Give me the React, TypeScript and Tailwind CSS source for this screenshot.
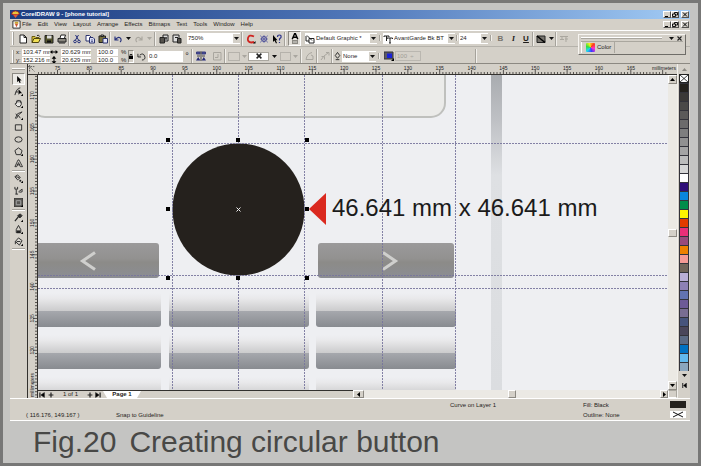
import type { ReactNode } from "react";

const MENUS = ["File", "Edit", "View", "Layout", "Arrange", "Effects", "Bitmaps", "Text", "Tools", "Window", "Help"];

const SWATCHES = [
  "#24211c", "#3a3836", "#4a4947", "#5b5a59", "#6c6b6b", "#7e7e7e", "#919191", "#a4a4a4", "#bcbcbc", "#d6d6d6",
  "#ffffff", "#2f0f78", "#0a86dc", "#008c4a", "#fdf500", "#e23c00", "#ea2f78", "#984a7c", "#ee8100", "#f59a95",
  "#706459", "#b9aed6", "#8d80b4", "#6273b0", "#6d5a96", "#796d92", "#47547c", "#4a465a", "#5b6a84", "#0071c2",
  "#62b9ee", "#8ba6be",
];

function Icon({ children, size = 10 }: { children: ReactNode; size?: number }) {
  return (
    <svg width={size} height={size} viewBox="0 0 10 10" fill="none" stroke="#222" strokeWidth="1" aria-hidden="true" className="shrink-0">
      {children}
    </svg>
  );
}

function Arrow({ color = "#111" }: { color?: string }) {
  return (
    <svg width="5" height="3" viewBox="0 0 5 3" aria-hidden="true" className="shrink-0">
      <path d="M0 0h5L2.5 3z" fill={color} />
    </svg>
  );
}

function Tool({ label, children }: { label: string; children: ReactNode }) {
  return (
    <button type="button" aria-label={label} className="flex h-[12px] w-[13px] shrink-0 items-center justify-center">
      {children}
    </button>
  );
}

function More({ label, color }: { label: string; color?: string }) {
  return (
    <button type="button" aria-label={label} className="flex h-[12px] w-[8px] shrink-0 items-center justify-center">
      <Arrow color={color} />
    </button>
  );
}

function Sep() {
  return <span className="h-[14px] w-[2px] shrink-0 border-r border-l border-r-[#f2f0ec] border-l-[#a5a29b]" />;
}

function Grip() {
  return <span className="mx-[2px] h-[13px] w-[2px] shrink-0 border-r border-l border-r-[#a5a29b] border-l-white" />;
}

function Combo({ label, value, width, icon }: { label: string; value: string; width: string; icon?: ReactNode }) {
  return (
    <label className={`flex h-[11px] shrink-0 items-center bg-white ${width}`}>
      {icon}
      <select aria-label={label} defaultValue={value} className="h-[11px] min-w-0 flex-1 appearance-none bg-transparent pl-px leading-[11px]">
        <option>{value}</option>
      </select>
      <span className="flex h-[9px] w-[7px] items-center justify-center bg-[#d4d0c8]">
        <Arrow />
      </span>
    </label>
  );
}

function Field({ label, value, width }: { label: string; value: string; width: string }) {
  return <input aria-label={label} defaultValue={value} className={`h-[7px] bg-white pl-px leading-[7px] ${width}`} />;
}

function WindowButtons() {
  const box = "flex h-[7px] w-[8px] items-center justify-center border border-t-white border-l-white border-r-[#55534f] border-b-[#55534f] bg-[#d4d0c8]";
  return (
    <div className="flex">
      <button type="button" aria-label="Minimize" className={box}>
        <svg width="6" height="5" viewBox="0 0 6 5"><path d="M1 4h3v1H1z" fill="#000" /></svg>
      </button>
      <button type="button" aria-label="Restore" className={box}>
        <svg width="6" height="5" viewBox="0 0 6 5" fill="none" stroke="#000"><path d="M2.500 2V.5h3v2.500H4M.5 2h3v2.500h-3z" strokeWidth=".9" /></svg>
      </button>
      <button type="button" aria-label="Close" className={`ml-[2px] ${box}`}>
        <svg width="6" height="5" viewBox="0 0 6 5" stroke="#000"><path d="M1 .5l4 4M5 .5l-4 4" /></svg>
      </button>
    </div>
  );
}

function MainToolbar() {
  return (
    <div className="flex h-[17px] shrink-0 items-center border-t border-b border-t-white border-b-[#b5b2ab]">
      <Grip />
      <Tool label="New"><Icon><path d="M2 1h4l2.500 2.500V9H2z" fill="#fff" /><path d="M6 1v2.500h2.500" /></Icon></Tool>
      <Tool label="Open"><Icon><path d="M1 8.500v-6h3l1 1h3v1" fill="#d9c23c" stroke="#6b5d10" /><path d="M1 8.500l2-4h6.500l-2 4z" fill="#f0df55" stroke="#4d4410" /><path d="M6 1.500q2-1 2.500 1" /></Icon></Tool>
      <Tool label="Save"><Icon><path d="M1 1.500h8v7.500H1z" fill="#55552c" /><path d="M3 1.500h4.500v3H3z" fill="#ddd" stroke="none" /><path d="M3 6.500h4v2H3z" fill="#111" stroke="none" /></Icon></Tool>
      <Tool label="Print"><Icon><path d="M3 4l1-3h4.500l-1 3" fill="#fff" /><path d="M1 4.500h8V8H1z" fill="#8a877f" /><path d="M2 9h6" /></Icon></Tool>
      <Sep />
      <Tool label="Cut"><Icon><path d="M3.500 1l3 5M6.500 1l-3 5" stroke="#26307a" /><circle cx="3" cy="7.500" r="1.300" stroke="#26307a" /><circle cx="7" cy="7.500" r="1.300" stroke="#26307a" /></Icon></Tool>
      <Tool label="Copy"><Icon><path d="M1 1.500h3.500L6 3v4H1z" fill="#fff" stroke="#2c3470" /><path d="M4.500 3.500H8L9.500 5v4h-5z" fill="#d8dcf4" stroke="#2c3470" /><path d="M6 6h2M6 7.500h2" stroke="#2c3470" strokeWidth=".7" /></Icon></Tool>
      <Tool label="Paste"><Icon><path d="M1 2h6.500v6.500H1z" fill="#77703c" /><path d="M3 1h2.500v1.500H3z" fill="#ccc" /><path d="M5 4.500h4.500V9H5z" fill="#e4e6f8" stroke="#2c3470" /></Icon></Tool>
      <Sep />
      <Tool label="Undo"><Icon><path d="M2 2.500v3.500h3.500M2.500 5.500q3.500-4 5.500-.5q.5 2-1 3" stroke="#27327c" strokeWidth="1.200" /></Icon></Tool>
      <More label="Undo list" />
      <Tool label="Redo"><Icon><path d="M8 2.500v3.500H4.500M7.500 5.500q-3.500-4-5.500-.5q-.5 2 1 3" stroke="#aaa79f" strokeWidth="1.200" /></Icon></Tool>
      <More label="Redo list" color="#aaa79f" />
      <span className="w-px" /><Sep /><span className="w-px" />
      <Tool label="Import"><Icon><path d="M4 1h5v6H4z" fill="#ddd" /><path d="M1 3.500h4.500V9H1z" fill="#55524d" /><path d="M6 4h2M7 3v3" /></Icon></Tool>
      <Tool label="Export"><Icon><path d="M1 1h6v7H1z" fill="#ddd" /><path d="M5.500 4.500H9V9H5.500z" fill="#55524d" /><path d="M3 3.500h3" /></Icon></Tool>
      <span className="w-[4px]" />
      <Combo label="Zoom level" value="750%" width="w-[53px]" />
      <span className="w-px" /><Sep /><span className="w-px" />
      <Tool label="Application launcher"><Icon><path d="M8 2.500Q3 0 2 4t3.500 4.500L8 8" stroke="#d02420" strokeWidth="1.800" /><path d="M7 9.500h2.500V7z" fill="#000" stroke="none" /></Icon></Tool>
      <Tool label="Corel graphics community"><Icon><circle cx="5" cy="5" r="2.500" stroke="#3a3d8a" /><path d="M1 1.500l8 7M9 1.500l-8 7M5 1v8M1 5h8" stroke="#5d60a8" strokeWidth=".7" /></Icon></Tool>
      <Tool label="What's This?"><Icon><path d="M1 1v7l1.500-1.500L4 9.500l1-.6-1.300-2.700H5.500z" fill="#000" stroke="none" /><path d="M5.500 3q0-2 2-2t1.500 2.500L7.500 5v1.500M7.500 8v1" stroke="#30368c" strokeWidth="1.200" /></Icon></Tool>
      <span className="w-px" /><Sep /><span className="w-[2px]" />
      <button type="button" aria-label="Text style" className="flex h-[15px] w-[13px] shrink-0 flex-col items-center border border-t-[#8c8982] border-r-white border-b-white border-l-[#8c8982] bg-[#e5e2dc]">
        <Icon size={8}><path d="M1.500 9L4.500 2h1L8.500 9M3 6.500h4" stroke="#000" strokeWidth="1.800" /></Icon>
        <span className="h-[4px] w-[6px] border border-[#8b8983] bg-[#b3b1ab]" />
      </button>
      <span className="w-[4px]" />
      <Combo label="Graphic style" value="Default Graphic *" width="w-[72px]" icon={<Icon><path d="M1 2v5h3M4 4.500h5V9H4zM2 1.500l5 5" /></Icon>} />
      <span className="mx-[2px]"><Sep /></span>
      <Combo label="Font" value="AvantGarde Bk BT" width="w-[72px]" icon={<Icon><path d="M1 3V2h5v1M3.500 2v5M4 5V4h5.500v1M7 4v5M6 9h2" /></Icon>} />
      <span className="mx-px"><Sep /></span>
      <Combo label="Font size" value="24" width="w-[29px]" />
      <span className="mx-[2px]"><Sep /></span>
      <button type="button" className="w-[13px] text-[8px] font-bold text-[#77746d]">B</button>
      <button type="button" className="w-[13px] font-serif text-[8px] font-bold italic">I</button>
      <button type="button" className="w-[12px] text-[8px] font-bold underline">U</button>
      <Sep />
      <Tool label="Text fill"><Icon><path d="M1 2h8v6.500H1z" fill="#77746e" /><path d="M1 2l8 6.500" stroke="#000" strokeWidth="1.500" /></Icon></Tool>
      <More label="Fill list" />
      <Sep />
      <Tool label="Format text"><Icon><path d="M1 2.500h8M3 2.500V6M7 2.500V8M1 5.500h4M6 5h3" stroke="#aaa79f" /></Icon></Tool>
    </div>
  );
}

function PropertyBar() {
  const grey = "#a9a69f";
  return (
    <div className="flex h-[16px] shrink-0 items-center pt-[2px]">
      <Grip />
      <div className="grid grid-cols-[6px_28px_11px_30px_6px_21px_9px] items-center">
        <span>x:</span><Field label="X position" value="103.47 mm" width="w-full" />
        <Icon size={8}><path d="M1 5h8" strokeWidth="1.500" /><path d="M3 2.500L0 5l3 2.500zM7 2.500L10 5 7 7.500z" fill="#000" stroke="none" /></Icon>
        <Field label="Object width" value="20.629 mm" width="w-full" /><span />
        <Field label="Horizontal scale" value="100.0" width="w-full" /><span className="pl-[3px]">%</span>
        <span>y:</span><Field label="Y position" value="152.216 mm" width="w-full" />
        <Icon size={8}><path d="M5 1v8" strokeWidth="1.500" /><path d="M2 3.500L5 0l3 3.500zM2 6.500L5 10l3-3.500z" fill="#000" stroke="none" /></Icon>
        <Field label="Object height" value="20.629 mm" width="w-full" /><span />
        <Field label="Vertical scale" value="100.0" width="w-full" /><span className="pl-[3px]">%</span>
      </div>
      <button type="button" aria-label="Lock ratio" className="mx-px flex h-[13px] w-[6px] items-center justify-center border border-t-[#8c8982] border-r-white border-b-white border-l-[#8c8982]">
        <svg width="4" height="6" viewBox="0 0 4 6"><path d="M0 3h4v3H0z" fill="#000" /><path d="M1 3V1.500h2V3" fill="none" stroke="#000" strokeWidth=".8" /></svg>
      </button>
      <Tool label="Rotation"><Icon size={9}><path d="M3 3.500q4-3 5.500 1t-3 4.500M1 2v3.500h3.500" /></Icon></Tool>
      <input aria-label="Angle" defaultValue="0.0" className="h-[11px] w-[35px] bg-white pl-px leading-[11px]" />
      <span className="w-[8px] text-center text-[9px]">°</span>
      <Sep />
      <span className="w-px" />
      <Tool label="Mirror"><Icon size={10}><path d="M.5 1h3.500v2H.5zM6 1h3.500v2H6z" fill="#474b9c" stroke="#3b3e7c" /><path d="M5 0v4M5 6v4M1 5h8" stroke="#222" strokeWidth=".8" /><path d="M0 9.500L2.200 6l2.200 3.500zM5.600 9.500L7.800 6 10 9.500z" fill="#272b7a" stroke="none" /></Icon></Tool>
      <span className="w-[3px]" />
      <Tool label="To front"><Icon><path d="M1.500 1.500h7.500V9H1.500zM3 6.500h3V3" stroke={grey} /></Icon></Tool>
      <span className="w-px" /><Sep /><span className="w-[2px]" />
      <span className="h-[9px] w-[12px] border border-[#b5b2ab]" /><More label="Start arrowhead list" color={grey} />
      <button type="button" aria-label="Line style" className="flex h-[9px] w-[21px] items-center justify-center border border-[#aaa79f] bg-white"><Icon size={6}><path d="M1 1l8 8M9 1L1 9" strokeWidth="2.500" /></Icon></button>
      <span className="w-px" /><More label="Line style list" />
      <span className="ml-[2px] h-[9px] w-[11px] border border-[#b5b2ab]" /><More label="End arrowhead list" color={grey} />
      <span className="w-px" /><Sep /><span className="w-px" />
      <Tool label="Auto close curve"><Icon><path d="M1 8.500q1-6 6-7M1 8.500h7V5l-2-1" stroke={grey} /></Icon></Tool>
      <Sep />
      <Tool label="Convert to curves"><Icon><path d="M1 9l3-4 4-3M1.500 5.500h3v3M6 1.500h3v3" stroke={grey} /></Icon></Tool>
      <Sep />
      <Icon size={9}><path d="M5 .5L2.500 4 5 7l2.500-3zM3 8.500h4" /></Icon>
      <Combo label="Outline width" value="None" width="w-[34px]" />
      <span className="mx-[2px]"><Sep /></span>
      <Tool label="Wrap paragraph text"><Icon><path d="M0 1h9v7H0z" fill="#5c5a66" stroke="#33323a" /><path d="M3 2.500h5V7H3z" fill="#1a22d8" stroke="none" /><path d="M7 10h3V7z" fill="#000" stroke="none" /></Icon></Tool>
      <input aria-label="Text wrap offset" disabled defaultValue="100  ÷" className="h-[10px] w-[26px] border border-[#bab7b0] pl-px leading-[8px] text-[#a09d96]" />
      <span className="w-[54px]" />
      <Sep />
    </div>
  );
}

function ColorDocker() {
  return (
    <aside className="absolute top-[24px] right-[4px] h-[21px] w-[108px] border border-t-[#f7f5f1] border-r-[#6f6d68] border-b-[#6f6d68] border-l-[#f7f5f1] bg-[#d4d0c8]">
      <div className="flex h-[6px] items-center gap-[3px] pr-[3px] pl-[2px]">
        <span className="mr-[4px] h-[2px] flex-1 border-t border-b border-t-white border-b-[#aaa79f]" />
        <button type="button" aria-label="Docker menu" className="flex"><Arrow /></button>
        <button type="button" aria-label="Close docker" className="flex"><Icon size={5}><path d="M1 1l8 8M9 1L1 9" strokeWidth="2.200" /></Icon></button>
      </div>
      <div className="mx-[2px] flex h-[12px] border-t border-[#aaa79f]">
        <button type="button" className="flex w-[34px] items-center gap-[2px] border-r border-r-[#aaa79f] border-l border-l-white pl-[4px]">
          <span className="h-[9px] w-[9px] shrink-0 rounded-[1px] bg-[conic-gradient(from_45deg,#ff3a20,#ff2fd0,#3838ff,#20d8e8,#30e040,#f8f020,#ff3a20)]" />
          Color
        </button>
      </div>
    </aside>
  );
}

const TOOLS: (null | { name: string; art: ReactNode; fly?: boolean })[] = [
  { name: "Pick", art: <path d="M3.500 1v7L5 6.500 6.200 9l1.300-.6L6.300 6H8.500z" fill="#000" stroke="none" /> },
  { name: "Shape", fly: true, art: <><path d="M1 9Q3 1 7 1M2 5.500h2.500" /><path d="M5 2.500v6l1.500-1.500H9z" fill="#000" stroke="none" /></> },
  { name: "Hand", fly: true, art: <><path d="M3 2.500q2.500-2 5 .5 1 3-1.500 5.500H4L1.500 6q-.5-1.500 1-1z" fill="#e7e5e0" /><path d="M3.500 1v3M5.500 1v3M7.200 1.500v3" strokeWidth=".7" /></> },
  { name: "Freehand", fly: true, art: <path d="M1.500 8l2.500-5 5-2-4 3.500L3 8zM2 3l2 3M5 5l2 3" strokeWidth=".9" /> },
  { name: "Rectangle", art: <path d="M1.500 2h7v6h-7z" /> },
  { name: "Ellipse", art: <ellipse cx="5" cy="5" rx="4" ry="3" /> },
  { name: "Polygon", fly: true, art: <path d="M5 1L9 4 7.500 8.500h-5L1 4z" /> },
  { name: "Text", art: <path d="M1 8.500L4.500 1h1L9.500 8.500H7L5 4 3 8.500zM3 6.500h4" strokeWidth=".9" /> },
  null,
  { name: "Interactive fill", fly: true, art: <><path d="M1 3l3-2 3 3-3 2.500zM2 3l4 1" /><path d="M6 7.500h2" strokeWidth="2" /></> },
  { name: "Interactive transparency", art: <path d="M1 1v2.500h3V1M2.500 4v5M1.500 9h3M5 6.500l4-3v3L6 7" /> },
  { name: "Interactive blend", fly: true, art: <><path d="M0 0h10v10H0z" fill="#5a5854" stroke="#33312e" /><path d="M2.500 3h5v4.500h-5z" stroke="#aaa" /></> },
  null,
  { name: "Eyedropper", fly: true, art: <><path d="M1 9l4-5" strokeWidth="1.300" /><path d="M4 3l3-2 2 2-2.500 2.500z" fill="#333" /></> },
  { name: "Outline", fly: true, art: <><path d="M5 .5L2.500 5v3.500h5V5z" /><path d="M3 6h4v3H3z" fill="#222" stroke="none" /></> },
  { name: "Fill", fly: true, art: <><path d="M1.500 5L5 1l4 3-3 5z" fill="#d9d6cf" /><path d="M1.500 5v3M3 5h4" /></> },
];

function Toolbox() {
  return (
    <div className="flex w-[17px] shrink-0 flex-col items-center">
      <span className="mt-[4px] mb-[3px] h-[2px] w-[13px] border-t border-b border-t-white border-b-[#a5a29b]" />
      {TOOLS.map((t, i) =>
        t === null ? (
          <span key={i} className="mt-px h-[2px] w-[13px] border-t border-b border-t-[#a5a29b] border-b-white" />
        ) : (
          <button
            key={i}
            type="button"
            aria-label={t.name}
            className={`flex h-[12px] w-[13px] items-center justify-center ${i === 0 ? "border border-t-[#8c8982] border-r-white border-b-white border-l-[#8c8982] bg-[#eceae5]" : ""}`}
          >
            <Icon size={9}>
              {t.art}
              {t.fly && <path d="M7.500 10H10V7.500z" fill="#000" stroke="none" />}
            </Icon>
          </button>
        ),
      )}
      <span className="mt-px h-[2px] w-[13px] border-t border-b border-t-[#a5a29b] border-b-white" />
    </div>
  );
}

// Ruler scale: five millimetres span 31.85 px, with a tick every half millimetre.
const STEP = 3.185;
const TOP_TICKS = Array.from({ length: 198 }, (_, i) => ({ pos: 19.5 + (i - 6) * STEP, index: i - 6 }));
const SIDE_TICKS = Array.from({ length: 104 }, (_, i) => ({ pos: 20.5 + (i - 6) * STEP, index: i - 6 }));

function TopRuler() {
  return (
    <svg className="h-full min-w-0 flex-1 text-[5px]" aria-label="Horizontal ruler">
      {TOP_TICKS.map(({ pos, index }) => (
        <g key={index}>
          <path d={`M${pos} 10v${index % 10 === 0 ? -4 : -2}`} stroke="#33312e" strokeWidth=".8" />
          {index % 10 === 0 && index <= 180 && <text x={pos} y="6" textAnchor="middle" fill="#222">{75 + index / 2}</text>}
        </g>
      ))}
      <text x="100%" dx="-1" y="6" textAnchor="end" fill="#222">millimeters</text>
    </svg>
  );
}

function SideRuler() {
  return (
    <svg className="h-full w-[11px] shrink-0 border-r border-l border-[#33312e] text-[5px]" aria-label="Vertical ruler">
      {SIDE_TICKS.map(({ pos, index }) => (
        <g key={index}>
          <path d={`M9 ${pos}h${index % 10 === 0 ? -4 : -2}`} stroke="#33312e" strokeWidth=".8" />
          {index % 10 === 0 && index <= 80 && (
            <text transform={`translate(6 ${pos}) rotate(-90)`} textAnchor="middle" fill="#222">{170 - index / 2}</text>
          )}
        </g>
      ))}
      <text transform="translate(6 322) rotate(-90)" textAnchor="start" fill="#222">millimeters</text>
    </svg>
  );
}

const KEY_COLUMNS = [{ x: 20, w: 141 }, { x: 169, w: 140 }, { x: 316, w: 140 }];
const KEY_ROWS = [293, 335, 377];
const HANDLES = [140, 209, 278].flatMap((y) => [168, 238, 307].map((x) => ({ x, y })));

function Drawing() {
  return (
    <svg className="min-w-0 flex-1 bg-[#eeeff2]" role="img" aria-label="Phone drawing">
      <defs>
        <linearGradient id="nav" x2="0" y2="1"><stop stopColor="#9b9a9b" /><stop offset=".45" stopColor="#929190" /><stop offset=".55" stopColor="#8c8b88" /><stop offset="1" stopColor="#8b8d93" /></linearGradient>
        <linearGradient id="keyTop" x2="0" y2="1"><stop stopColor="#eeeff2" /><stop offset=".3" stopColor="#e9e9eb" /><stop offset="1" stopColor="#cbcbcc" /></linearGradient>
        <linearGradient id="keyBottom" x2="0" y2="1"><stop stopColor="#a6a8ad" /><stop offset="1" stopColor="#888b90" /></linearGradient>
        <linearGradient id="edge" x2="0" y2="1"><stop stopColor="#a9acb0" /><stop offset=".14" stopColor="#bec0c4" /><stop offset=".32" stopColor="#dee0e3" /><stop offset="1" stopColor="#dbdde0" /></linearGradient>
      </defs>
      <g transform="translate(-38 -75)">
        <rect x="31" y="50" width="414" height="67" rx="14" fill="#ebebe9" stroke="#bfc0bd" strokeWidth="2" />
        <rect x="491" y="75" width="11" height="315" fill="url(#edge)" />
        {KEY_ROWS.map((y) =>
          KEY_COLUMNS.map(({ x, w }) => (
            <g key={`${x}-${y}`}>
              <rect x={x} y={y} width={w} height="18" fill="url(#keyTop)" />
              <path d={`M${x} ${y + 18}h${w}v13q0 3-3 3h${6 - w}q-3 0-3-3z`} fill="url(#keyBottom)" />
            </g>
          )),
        )}
        <rect x="20" y="243" width="139" height="35" rx="3" fill="url(#nav)" />
        <rect x="318" y="243" width="136" height="35" rx="3" fill="url(#nav)" />
        <path d="M95 252.500L82.500 261 95 269.500M383 252.500l12.500 8.500-12.500 8.500" fill="none" stroke="#cfcfcd" strokeWidth="3" />
        <circle cx="238.500" cy="209.500" r="66" fill="#25211d" />
        <path d="M236.500 207.500l4 4M240.500 207.500l-4 4" stroke="#eee" />
      </g>
      <g transform="translate(-38 -75)" stroke="#77749c" strokeDasharray="2 1" strokeOpacity=".9" shapeRendering="crispEdges">
        {[143.5, 275.5, 288.5].map((y) => <line key={y} x1="38" x2="800" y1={y} y2={y} />)}
        {[172.5, 304.5, 382.5, 455.5].map((x) => <line key={x} x1={x} x2={x} y1="75" y2="800" />)}
        <path d="M238.500 75v68M238.500 276v500" />
      </g>
      <g transform="translate(-38 -75)">
        {HANDLES.filter((h) => h.x !== 238 || h.y !== 209).map(({ x, y }) => <rect key={`${x}-${y}`} x={x - 2} y={y - 2} width="4" height="4" fill="#000" />)}
        <path d="M309 209l17-16v32z" fill="#da291f" />
        <text x="332" y="216" fill="#1b1b1b" className="text-[24px]">46.641 mm x 46.641 mm</text>
      </g>
    </svg>
  );
}

function ScrollButton({ label, d, size }: { label: string; d: string; size: string }) {
  return (
    <button type="button" aria-label={label} className={`flex shrink-0 items-center justify-center border border-t-white border-r-[#8c8982] border-b-[#8c8982] border-l-white bg-[#d4d0c8] ${size}`}>
      <svg width="5" height="5" viewBox="0 0 5 5"><path d={d} fill="#000" /></svg>
    </button>
  );
}

function PageBar() {
  return (
    <div className="flex h-[8px] shrink-0">
      <div className="flex flex-1 items-center border-t border-[#33312e]">
        <button type="button" aria-label="First page" className="ml-px"><Icon size={6}><path d="M1.500 1v8" strokeWidth="2" /><path d="M9 1v8L3 5z" fill="#000" /></Icon></button>
        <button type="button" aria-label="Add page before" className="ml-[3px]"><Icon size={6}><path d="M5 1v8M1 5h8" strokeWidth="2" /></Icon></button>
        <span className="ml-[9px] w-[24px]">1 of 1</span>
        <button type="button" aria-label="Add page after"><Icon size={6}><path d="M5 1v8M1 5h8" strokeWidth="2" /></Icon></button>
        <button type="button" aria-label="Last page" className="ml-[2px]"><Icon size={6}><path d="M8.500 1v8" strokeWidth="2" /><path d="M1 1v8l6-4z" fill="#000" /></Icon></button>
        <button type="button" className="ml-[2px] h-[7px] w-[38px] bg-white text-[6px] leading-[7px] font-bold [clip-path:polygon(0_0,100%_0,34px_100%,4px_100%)]">Page 1</button>
      </div>
      <div className="flex flex-1 bg-[#ebe9e4]">
        <ScrollButton label="Scroll left" d="M4 0v5L1 2.500z" size="h-[8px] w-[11px]" />
        <span className="flex-1" />
        <span className="h-[8px] w-[8px] border border-t-white border-r-[#8c8982] border-b-[#8c8982] border-l-white bg-[#d4d0c8]" />
        <span className="flex-1" />
        <ScrollButton label="Scroll right" d="M1 0v5l3-2.500z" size="h-[8px] w-[8px]" />
      </div>
    </div>
  );
}

function Palette() {
  return (
    <div className="flex w-[13px] shrink-0 flex-col items-center border-l border-[#f2f0ec]">
      <button type="button" aria-label="Scroll palette up" className="flex h-[10px] items-center"><svg width="5" height="3"><path d="M0 3h5L2.500 0z" fill="#8c8982" /></svg></button>
      <button type="button" aria-label="No color" className="h-[9px] w-[10px] border border-[#222] bg-white">
        <svg width="8" height="7" viewBox="0 0 8 7" stroke="#111" strokeWidth=".8"><path d="M0 0l8 7M8 0L0 7" /></svg>
      </button>
      {SWATCHES.map((c) => (
        <button key={c} type="button" aria-label={c} className="h-[9px] w-[10px] shrink-0 border border-b-0 border-[#33333a]" style={{ backgroundColor: c }} />
      ))}
      <button type="button" aria-label="Scroll palette down" className="flex h-[9px] items-center"><Arrow /></button>
      <button type="button" aria-label="Expand palette" className="flex h-[11px] items-center"><Icon size={5}><path d="M1.500 0v10" strokeWidth="2" /><path d="M9 0v10L3 5z" fill="#000" /></Icon></button>
    </div>
  );
}

export default function App() {
  return (
    <div className="flex h-screen flex-col border-[3px] border-[#777776] bg-[#c4c4c2] font-['Liberation_Sans',Arial,sans-serif] text-[#1f1d1b]">
      <main className="relative mx-[7px] mt-[7px] mr-[8px] flex min-h-0 flex-1 flex-col bg-[#d4d0c8] text-[6px] leading-[7px]">
        <header className="flex h-[9px] shrink-0 items-center bg-linear-to-r from-[#1c3c80] via-[#4f76b8] to-[#a3ccf5] pr-px pl-px text-white">
          <Icon size={9}><path d="M1 3q4-4 8 0v2H1z" fill="#e8c53a" stroke="#a22" /><path d="M2 5h6L5 9z" fill="#e05a34" stroke="none" /></Icon>
          <h1 className="ml-px flex-1 font-bold">CorelDRAW 9 - [phone tutorial]</h1>
          <WindowButtons />
        </header>
        <nav className="flex h-[11px] shrink-0 items-center pr-px pl-[2px]">
          <Icon size={9}><path d="M1 1h8v8H1z" fill="#fff" /><path d="M3 4h4L5 8z" fill="#cf5630" stroke="none" /><path d="M3 3h4" stroke="#c9a52e" strokeWidth="2" /></Icon>
          <div className="ml-px flex flex-1 gap-[6px]">
            {MENUS.map((m) => <button key={m} type="button">{m}</button>)}
          </div>
          <WindowButtons />
        </nav>
        <MainToolbar />
        <PropertyBar />
        <ColorDocker />
        <div className="flex min-h-0 flex-1 border-t border-[#8c8982]">
          <Toolbox />
          <div className="flex min-w-0 flex-1 flex-col">
            <div className="flex h-[11px] shrink-0 border-b border-[#33312e]">
              <div className="flex w-[11px] shrink-0 items-center border-l border-[#33312e]">
                <Icon size={8}><path d="M2 0v8M0 2h8M3 3l5 5" strokeWidth=".8" strokeDasharray="2 1" /></Icon>
              </div>
              <TopRuler />
            </div>
            <div className="flex min-h-0 flex-1">
              <SideRuler />
              <div className="flex min-w-0 flex-1 flex-col">
                <div className="flex min-h-0 flex-1">
                  <Drawing />
                  <div className="flex w-[9px] flex-col bg-[#ebe9e4]">
                    <ScrollButton label="Scroll up" d="M0 4h5L2.500 1z" size="h-[9px] w-[9px]" />
                    <span className="flex-1" />
                    <span className="h-[8px] w-[9px] border border-t-white border-r-[#8c8982] border-b-[#8c8982] border-l-white bg-[#d4d0c8]" />
                    <span className="flex-1" />
                    <ScrollButton label="Scroll down" d="M0 1h5L2.500 4z" size="h-[9px] w-[9px]" />
                  </div>
                </div>
                <div className="flex">
                  <div className="min-w-0 flex-1"><PageBar /></div>
                  <span className="w-[9px] border border-t-[#aaa79f] border-r-[#aaa79f] border-b-white border-l-white" />
                </div>
              </div>
            </div>
          </div>
          <Palette />
        </div>
        <footer className="grid h-[23px] shrink-0 grid-cols-[90px_1fr_133px_107px] items-center border-t border-b border-white pl-[16px] leading-[8px]">
          <span className="pt-[10px]">( 116.176, 149.167 )</span>
          <span className="pt-[10px]">Snap to Guideline</span>
          <span className="pb-[9px]">Curve on Layer 1</span>
          <div className="grid grid-cols-[87px_16px] gap-y-[2px]">
            <span>Fill: Black</span><span className="h-[7px] bg-[#24211c]" />
            <span>Outline: None</span>
            <span className="flex h-[7px] justify-center bg-white"><svg width="12" height="7" viewBox="0 0 12 7" stroke="#111"><path d="M1 1l10 5M11 1L1 6" /></svg></span>
          </div>
        </footer>
      </main>
      <h2 className="flex h-[42px] shrink-0 items-center gap-[13px] pl-[30px] text-[30px] leading-[42px] text-[#484846]">
        <span>Fig.20</span>
        <span>Creating circular button</span>
      </h2>
    </div>
  );
}
